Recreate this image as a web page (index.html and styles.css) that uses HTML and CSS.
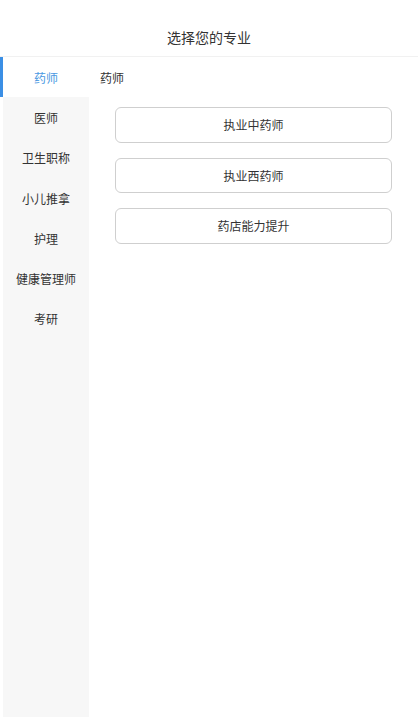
FILE: index.html
```html
<!DOCTYPE html>
<html lang="zh-CN">
<head>
<meta charset="utf-8">
<title>选择您的专业</title>
<link rel="stylesheet" href="styles.css">
</head>
<body>
<div class="page">
  <header class="header">选择您的专业</header>
  <div class="main">
    <nav class="nav">
      <div class="nav-item active">药师</div>
      <div class="nav-item">医师</div>
      <div class="nav-item">卫生职称</div>
      <div class="nav-item">小儿推拿</div>
      <div class="nav-item">护理</div>
      <div class="nav-item">健康管理师</div>
      <div class="nav-item">考研</div>
      <div class="nav-fill"></div>
    </nav>
    <section class="content">
      <div class="content-title">药师</div>
      <div class="options">
        <div class="option">执业中药师</div>
        <div class="option">执业西药师</div>
        <div class="option">药店能力提升</div>
      </div>
    </section>
  </div>
</div>
</body>
</html>
```

FILE: styles.css
```css
html, body {
  margin: 0;
  padding: 0;
  background: #ffffff;
}
body {
  font-family: "Noto Sans CJK SC", "Noto Sans", sans-serif;
  color: #333333;
}
.page {
  width: 418px;
  height: 720px;
  display: flex;
  flex-direction: column;
}
.header {
  height: 57px;
  box-sizing: border-box;
  padding-top: 18px;
  display: flex;
  align-items: center;
  justify-content: center;
  font-size: 14px;
  color: #333333;
  border-bottom: 1px solid #f1f1f1;
}
.main {
  flex: 1;
  display: flex;
  min-height: 0;
}
.nav {
  width: 89px;
  display: flex;
  flex-direction: column;
  padding-bottom: 3px;
}
.nav-item {
  height: 40.3px;
  display: flex;
  align-items: center;
  justify-content: center;
  font-size: 12px;
  color: #333333;
  background: #f7f7f7;
  margin-left: 3px;
}
.nav-item.active {
  margin-left: 0;
  background: #ffffff;
  border-left: 3px solid #3b8fe5;
  color: #4a98e2;
}
.nav-fill {
  flex: 1;
  margin-left: 3px;
  background: #f7f7f7;
}
.content {
  flex: 1;
  display: flex;
  flex-direction: column;
}
.content-title {
  height: 40px;
  display: flex;
  align-items: center;
  padding-left: 11px;
  font-size: 12px;
  color: #333333;
}
.options {
  display: flex;
  flex-direction: column;
  gap: 15px;
  padding: 10px 26px 0 26px;
}
.option {
  height: 35.5px;
  box-sizing: border-box;
  border: 1.5px solid #cfcfcf;
  border-radius: 6px;
  display: flex;
  align-items: center;
  justify-content: center;
  font-size: 12px;
  color: #333333;
}
```
